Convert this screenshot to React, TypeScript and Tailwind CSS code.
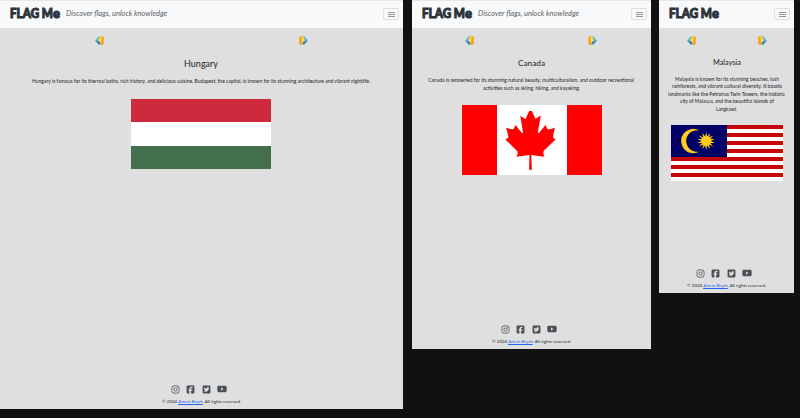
import React from "react";
import { FaInstagram, FaSquareFacebook, FaSquareTwitter, FaYoutube } from "react-icons/fa6";

type Line = { text: string; width: number };

/* A line of text set to an exact measure. */
function Fit({ width, children, className = "" }: { width: number; children: React.ReactNode; className?: string }) {
  const ref = React.useRef<HTMLSpanElement>(null);
  const [scale, setScale] = React.useState(1);
  React.useLayoutEffect(() => {
    if (ref.current) setScale(width / ref.current.getBoundingClientRect().width);
  }, [width]);
  return (
    <span className="flex shrink-0 justify-start overflow-visible" style={{ width }}>
      <span
        ref={ref}
        className={`inline-block shrink-0 origin-left whitespace-nowrap ${className}`}
        style={{ transform: `scaleX(${scale})` }}
      >
        {children}
      </span>
    </span>
  );
}

function Arrow({ flip = false }: { flip?: boolean }) {
  return (
    <svg viewBox="0 0 18 18" className={`h-[9px] w-[9px] ${flip ? "-scale-x-100" : ""}`}>
      <path d="M7 1h6L8 9H0z" fill="#55b8ea" />
      <path d="M0 9h8l5 8H7z" fill="#3688bd" />
      <path d="M9 1h8v16h-6V9H6z" fill="#ffc91f" />
      <path d="M14 1h3v16h-5z" fill="#f89b24" />
      <path d="M6 9l6-5v8z" fill="#ffe34d" />
    </svg>
  );
}

function Hungary() {
  return (
    <div className="flex h-[70px] w-[140px] flex-col">
      <div className="flex-1 bg-[#cd2a3e]" />
      <div className="flex-1 bg-white" />
      <div className="flex-1 bg-[#436f4d]" />
    </div>
  );
}

function Canada() {
  return (
    <div className="flex h-[70px] w-[140px] bg-white">
      <div className="w-[35px] bg-[#ff0000]" />
      <div className="flex flex-1 items-start justify-center pt-[6px]">
        <svg viewBox="187 109 267 266" preserveAspectRatio="none" className="h-[59px] w-[53px]">
          <path
            fill="#ff0000"
            d="M201 232l-13.3 4.4 61.4 54c4.7 13.7-1.6 17.8-5.6 25l66.6-8.4-1.6 67 13.9-.3-3.1-66.6 66.7 8c-4.1-8.7-7.8-13.3-4-27.2l61.3-51-10.7-4c-8.8-6.8 3.8-32.6 5.6-48.9 0 0-35.7 12.3-38 5.8l-9.2-17.5-32.6 35.8c-3.5.9-5-.5-5.9-3.5l15-74.8-23.8 13.4q-3.2 1.3-5.2-2.2l-23-46-23.6 47.8q-2.8 2.5-5 .7L264 130.8l13.7 74.1c-1.1 3-3.7 3.8-6.7 2.2l-31.2-35.3c-4 6.5-6.8 17.1-12.2 19.5s-23.5-4.5-35.6-7c4.2 14.8 17 39.6 9 47.7"
          />
        </svg>
      </div>
      <div className="w-[35px] bg-[#ff0000]" />
    </div>
  );
}

const star = Array.from({ length: 28 }, (_, i) => {
  const r = i % 2 ? 4.6 : 9;
  const a = (i * Math.PI) / 14;
  return `${35.2 + r * Math.sin(a)},${16 - r * Math.cos(a)}`;
}).join(" ");

function Malaysia() {
  return (
    <svg viewBox="0 0 112 56" className="h-[56px] w-[112px]">
      <rect width="112" height="56" fill="#fff" />
      {[0, 8, 16, 24, 32, 40, 48].map((y) => (
        <rect key={y} y={y} width="112" height="4" fill="#c4080c" />
      ))}
      <rect width="56" height="32" fill="#000066" />
      <path d="M28.5 5.5A12.2 12.2 0 1 0 28.5 26.5A10.8 10.8 0 1 1 28.5 5.5Z" fill="#ffcc1a" />
      <polygon points={star} fill="#ffcc1a" />
    </svg>
  );
}

type ScreenProps = {
  frame: string;
  tagline?: boolean;
  arrows: string;
  title: string;
  titleWidth: number;
  titleClass: string;
  lines: Line[];
  linesClass: string;
  flag: React.ReactNode;
  flagClass: string;
};

function Screen(p: ScreenProps) {
  return (
    <section className={`flex shrink-0 flex-col bg-[#dfdfdf] ${p.frame}`}>
      <header className="flex h-[28px] shrink-0 items-center border-t border-[#e6e7e8] bg-[#f8f9fb] pr-[4px] pl-[10px]">
        <Fit
          width={50}
          className="h-[17px] font-['Lato'] text-[12.5px] leading-[14px] font-black text-[#2c3338] [-webkit-text-stroke:1px_#2c3338]"
        >
          FLAG M<span className="text-[14px]">e</span>
        </Fit>
        {p.tagline && (
          <div className="ml-[6px] pb-[3px]">
            <Fit width={101} className="font-['Lato'] text-[8.5px] leading-[14px] font-normal text-[#5a5f63] italic">
              Discover flags, unlock knowledge
            </Fit>
          </div>
        )}
        <div className="mb-px ml-auto flex h-[12px] w-[16px] shrink-0 flex-col items-center justify-center gap-px rounded-[2px] border border-[#dedfe1]">
          <i className="h-px w-[7px] bg-[#94979a]" />
          <i className="h-px w-[7px] bg-[#94979a]" />
          <i className="h-px w-[7px] bg-[#94979a]" />
        </div>
      </header>
      <div className={`mt-[8px] flex shrink-0 justify-between ${p.arrows}`}>
        <Arrow />
        <Arrow flip />
      </div>
      <h2 className={`flex shrink-0 justify-center font-['Lato'] text-[#212529] ${p.titleClass}`}>
        <Fit width={p.titleWidth}>{p.title}</Fit>
      </h2>
      <div className={`flex shrink-0 flex-col items-center font-['Lato'] text-[5px] text-[#212529] ${p.linesClass}`}>
        {p.lines.map((l) => (
          <Fit key={l.text} width={l.width}>
            {l.text}
          </Fit>
        ))}
      </div>
      <div className={`flex shrink-0 justify-center ${p.flagClass}`}>{p.flag}</div>
      <footer className="mt-auto flex flex-col items-center pb-[3px]">
        <div className="flex items-center gap-[6.3px] pr-[5px] text-[9px] text-[#495057]">
          <FaInstagram />
          <FaSquareFacebook />
          <FaSquareTwitter />
          <FaYoutube className="text-[10px]" />
        </div>
        <p className="mt-[4px] flex font-['Lato'] text-[4.5px] leading-[8px] text-[#212529]">
          <Fit width={79}>
            © 2024 <a className="text-[#2563f5] underline">Artem Bryzh</a>. All rights reserved.
          </Fit>
        </p>
      </footer>
    </section>
  );
}

export default function App() {
  return (
    <main className="flex h-[418px] w-[800px] items-start overflow-hidden bg-[#111111]">
      <Screen
        frame="h-[409px] w-[403px]"
        tagline
        arrows="pl-[95px] pr-[95px]"
        title="Hungary"
        titleWidth={34}
        titleClass="mt-[12px] pr-px text-[8.8px] leading-[14px]"
        lines={[
          {
            text: "Hungary is famous for its thermal baths, rich history, and delicious cuisine. Budapest, the capital, is known for its stunning architecture and vibrant nightlife.",
            width: 338,
          },
        ]}
        linesClass="mt-[6px] pr-px leading-[8px]"
        flag={<Hungary />}
        flagClass="mt-[14px] pr-px"
      />
      <Screen
        frame="ml-[9px] h-[349px] w-[239px]"
        tagline
        arrows="pl-[53px] pr-[54px]"
        title="Canada"
        titleWidth={27}
        titleClass="mt-[11px] pr-px text-[8.3px] leading-[14px]"
        lines={[
          { text: "Canada is renowned for its stunning natural beauty, multiculturalism, and outdoor recreational", width: 206 },
          { text: "activities such as skiing, hiking, and kayaking.", width: 97 },
        ]}
        linesClass="mt-[6px] pr-px leading-[8px]"
        flag={<Canada />}
        flagClass="mt-[13px]"
      />
      <Screen
        frame="ml-[8px] h-[293px] w-[135px]"
        arrows="pl-[28px] pr-[27px]"
        title="Malaysia"
        titleWidth={28}
        titleClass="mt-[10px] text-[7px] leading-[14px]"
        lines={[
          { text: "Malaysia is known for its stunning beaches, lush", width: 104 },
          { text: "rainforests, and vibrant cultural diversity. It boasts", width: 110 },
          { text: "landmarks like the Petronas Twin Towers, the historic", width: 117 },
          { text: "city of Malacca, and the beautiful islands of", width: 94 },
          { text: "Langkawi.", width: 21 },
        ]}
        linesClass="mt-[6.5px] leading-[7.5px]"
        flag={<Malaysia />}
        flagClass="mt-[12px]"
      />
    </main>
  );
}
